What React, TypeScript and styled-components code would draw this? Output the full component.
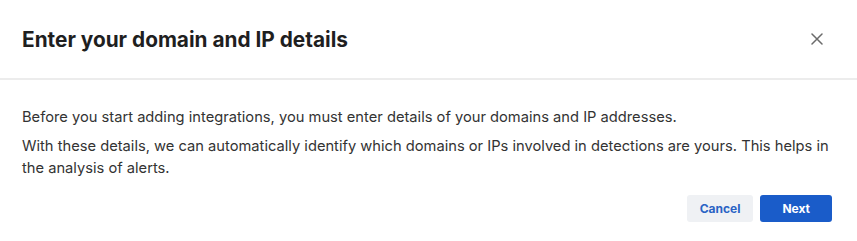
import styled, { createGlobalStyle } from "styled-components"

const GlobalStyle = createGlobalStyle`
  html, body {
    margin: 0;
    padding: 0;
    background: #ffffff;
  }
  body {
    font-family: Inter, "Noto Sans", "Liberation Sans", sans-serif;
    -webkit-font-smoothing: antialiased;
  }
`

const Modal = styled.div`
  width: 857px;
  height: 241px;
  background: #ffffff;
  display: flex;
  flex-direction: column;
`

const Header = styled.div`
  height: 80px;
  box-sizing: border-box;
  padding: 0 30px 0 22px;
  display: flex;
  align-items: center;
  justify-content: space-between;
  border-bottom: 2px solid #ececec;
`

const Title = styled.h2`
  margin: 0;
  font-size: 20.8px;
  font-weight: 700;
  color: #1f1f1f;
`

const CloseButton = styled.button`
  background: none;
  border: none;
  padding: 4px;
  margin: 0;
  cursor: pointer;
  color: #6b6b6b;
  display: flex;
  align-items: center;
`

const Body = styled.div`
  padding: 26px 22px 0 22px;
`

const Paragraph = styled.p`
  margin: 0 0 7px 0;
  font-size: 14.7px;
  line-height: 22px;
  color: #333333;
`

const Footer = styled.div`
  display: flex;
  justify-content: flex-end;
  gap: 7px;
  padding: 9px 25px 0 22px;
`

const Button = styled.button<{ $primary?: boolean }>`
  height: 27px;
  padding: 0 ${(p) => (p.$primary ? "22px" : "13px")};
  border-radius: 3px;
  border: none;
  font-family: inherit;
  font-size: 12px;
  font-weight: 700;
  cursor: pointer;
  background: ${(p) => (p.$primary ? "#1a5cc9" : "#eff1f4")};
  color: ${(p) => (p.$primary ? "#ffffff" : "#2a63c4")};
`

export default function App() {
  return (
    <>
      <GlobalStyle />
      <Modal>
        <Header>
          <Title>Enter your domain and IP details</Title>
          <CloseButton aria-label="Close">
            <svg width="12" height="12" viewBox="0 0 12 12">
              <path d="M1 1 L11 11 M11 1 L1 11" stroke="currentColor" strokeWidth="1.5" strokeLinecap="round" />
            </svg>
          </CloseButton>
        </Header>
        <Body>
          <Paragraph>
            Before you start adding integrations, you must enter details of your domains and IP addresses.
          </Paragraph>
          <Paragraph>
            With these details, we can automatically identify which domains or IPs involved in detections are
            yours. This helps in the analysis of alerts.
          </Paragraph>
        </Body>
        <Footer>
          <Button>Cancel</Button>
          <Button $primary>Next</Button>
        </Footer>
      </Modal>
    </>
  )
}
